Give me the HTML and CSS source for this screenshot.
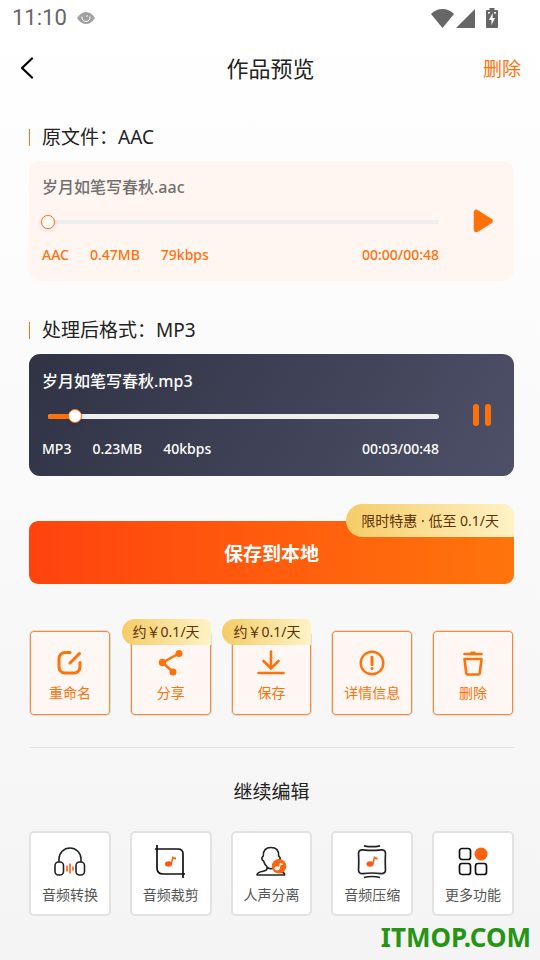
FILE: index.html
```html
<!DOCTYPE html>
<html lang="zh-CN">
<head>
<meta charset="utf-8">
<meta name="viewport" content="width=device-width, initial-scale=1">
<title>作品预览</title>
<link rel="stylesheet" href="styles.css">
</head>
<body>
<div class="status">
  <span class="clock">11:10</span>
  <svg class="eye" width="18" height="12" viewBox="0 0 18 12"><path d="M0 6Q4 0 9 0t9 6Q14 12 9 12T0 6Z" fill="#a0a0a0"/><path d="M5 4.500a4.100 4.100 0 1 0 8 0" fill="none" stroke="#fff" stroke-width="1"/><circle cx="10" cy="4" r=".8" fill="#fff"/></svg>
  <span class="signals">
    <svg width="23" height="19" viewBox="0 0 23 19"><path d="M0 5Q5 0 11.500 0T23 5L11.500 19Z" fill="#666"/></svg>
    <svg width="19" height="19" viewBox="0 0 19 19"><path d="M19 0V19H0Z" fill="#666"/></svg>
    <svg class="battery" width="12" height="20" viewBox="0 0 12 20"><path d="M3.500 0h5v2H11a1 1 0 0 1 1 1v16a1 1 0 0 1-1 1H1a1 1 0 0 1-1-1V3a1 1 0 0 1 1-1h2.500Z" fill="#666"/><path d="M6.600 5 3 12h2.500v5L9 10H6.600ZM2 4h2v1.500H2Zm6 0h2v1.500H8Z" fill="#fff"/></svg>
  </span>
</div>
<header class="bar">
  <button class="back" aria-label="返回"><svg width="14" height="22" viewBox="0 0 14 22"><path d="M12 1.500 2 11l10 9.500" fill="none" stroke="#000" stroke-width="2.200" stroke-linecap="round" stroke-linejoin="round"/></svg></button>
  <h1>作品预览</h1>
  <button class="remove">删除</button>
</header>
<main>
  <h2 class="label">原文件：AAC</h2>
  <section class="player light">
    <div class="track">
      <h3>岁月如笔写春秋.aac</h3>
      <div class="seek"><span class="rail"></span><input type="range" min="0" max="100" value="0" aria-label="原文件播放进度"></div>
      <div class="meta"><span>AAC</span><span>0.47MB</span><span>79kbps</span><span class="time">00:00/00:48</span></div>
    </div>
    <button class="toggle" aria-label="播放"><svg width="20" height="24" viewBox="0 0 20 24"><path d="M3.500 3.500v17L17 12Z" fill="#ff7109" stroke="#ff7109" stroke-width="5.500" stroke-linejoin="round"/></svg></button>
  </section>

  <h2 class="label">处理后格式：MP3</h2>
  <section class="player dark">
    <div class="track">
      <h3>岁月如笔写春秋.mp3</h3>
      <div class="seek"><span class="rail"><span class="fill" style="width:7%"></span></span><input type="range" min="0" max="100" value="7" aria-label="处理后播放进度"></div>
      <div class="meta"><span>MP3</span><span>0.23MB</span><span>40kbps</span><span class="time">00:03/00:48</span></div>
    </div>
    <button class="toggle" aria-label="暂停"><svg width="20" height="22" viewBox="0 0 20 22"><rect x="0" width="6" height="22" rx="3" fill="#ff7109"/><rect x="12" width="6" height="22" rx="3" fill="#ff7109"/></svg></button>
  </section>

  <div class="save">
    <button class="primary">保存到本地</button>
    <span class="promo">限时特惠 · 低至 0.1/天</span>
  </div>

  <div class="tiles actions">
    <button class="tile"><svg width="28" height="28" viewBox="0 0 28 28" fill="none" stroke="#ff7109" stroke-width="3" stroke-linecap="round"><path d="M14 3.500H9a6 6 0 0 0-6 6V18a6 6 0 0 0 6 6h9a6 6 0 0 0 6-6V13.500M14 14 23.500 4.500"/></svg>重命名</button>
    <button class="tile"><span class="price">约￥0.1/天</span><svg width="28" height="28" viewBox="0 0 28 28" fill="#ff7109"><path d="M22 4.500 5.500 13.500 16 23" fill="none" stroke="#ff7109" stroke-width="2.400"/><circle cx="22" cy="4.500" r="3.500"/><circle cx="5.500" cy="13.500" r="3.700"/><circle cx="16" cy="23" r="3.500"/></svg>分享</button>
    <button class="tile"><span class="price">约￥0.1/天</span><svg width="28" height="28" viewBox="0 0 28 28" fill="none" stroke="#ff7109" stroke-width="2.600" stroke-linecap="round"><path d="M14 2.500V18M6.500 12l7.500 7.500 7.500-7.500M1.500 24h25"/></svg>保存</button>
    <button class="tile"><svg width="28" height="28" viewBox="0 0 28 28" fill="none" stroke="#ff7109" stroke-width="2.400" stroke-linecap="round"><circle cx="14" cy="14" r="11.300"/><path d="M14 8v7.500" stroke-width="3"/><circle cx="14" cy="19.500" r="1.500" fill="#ff7109" stroke="none"/></svg>详情信息</button>
    <button class="tile"><svg width="28" height="28" viewBox="0 0 28 28" fill="none" stroke="#ff7109" stroke-width="2.600" stroke-linecap="round" stroke-linejoin="round"><path d="M5.500 5h17M12.500 3.700h3M5.500 10h17l-1.800 14.500q-.2 1-1.500 1h-10.400q-1.300 0-1.500-1Z"/></svg>删除</button>
  </div>

  <h2 class="more">继续编辑</h2>
  <div class="tiles tools">
    <button class="tile"><svg width="34" height="34" viewBox="0 0 34 34" fill="none" stroke="#222" stroke-width="1.600"><path d="M6 17v-3a11 11 0 0 1 22 0v3"/><rect x="2" y="17" width="8.500" height="13" rx="3.500"/><rect x="23" y="17" width="8.500" height="13" rx="3.500"/><path d="M14 20.500v6M17 18.500v10M20 21.500v4" stroke="#ff6a2a" stroke-width="1.800"/></svg>音频转换</button>
    <button class="tile"><svg width="34" height="34" viewBox="0 0 34 34" fill="none" stroke="#111" stroke-width="1.700"><path d="M3 0v23q0 6 6 6h22M1 4h23q5 0 5 5v24"/><g transform="translate(11 11)" stroke="none" fill="#ff5710"><ellipse cx="3.500" cy="8" rx="3.500" ry="2.800"/><path d="M5.500 8 7.500 0q1.500 2 3.500 1.500v2Q9 3.500 8.300 2.800L7 8Z"/></g></svg>音频裁剪</button>
    <button class="tile"><svg width="34" height="34" viewBox="0 0 34 34" fill="none" stroke="#222" stroke-width="1.600" stroke-linejoin="round"><path d="M13 24v-2.500Q10.500 19.500 9.500 16 7.500 15 8 12.500L9.300 11Q9 2.500 17 2.500T24.700 11L26 12.500Q26.500 15 24.500 16 23.500 19.500 21 21.500V24M13 22.500q4 2.500 8 0M13 24q-.5 1.500-4 2.200-6 1-6 3.800h27.500q.5-2-2.500-3"/><circle cx="25" cy="21.300" r="7.200" fill="#ff6309" stroke="none"/><g transform="translate(20.500 17.300) scale(.75)" stroke="none" fill="#fff"><ellipse cx="3.500" cy="8" rx="3.500" ry="2.800"/><path d="M5.500 8 7.500 0q1.500 2 3.500 1.500v2Q9 3.500 8.300 2.800L7 8Z"/></g></svg>人声分离</button>
    <button class="tile"><svg width="34" height="34" viewBox="0 0 34 34" fill="none" stroke="#222" stroke-width="1.700"><path d="M8 4.800q9 1.200 18 0 4.500-.3 4.500 4-.5 8 0 16 0 4-4.500 3.800-9-1.200-18 0-4.500.3-4.500-3.800.5-8 0-16 0-4.300 4.500-4ZM9 .8q8 1.800 16 0M9 32.500q8-2 16 0"/><g transform="translate(11.500 11)" stroke="none" fill="#ff5710"><ellipse cx="3.500" cy="8" rx="3.500" ry="2.800"/><path d="M5.500 8 7.500 0q1.500 2 3.500 1.500v2Q9 3.500 8.300 2.800L7 8Z"/></g></svg>音频压缩</button>
    <button class="tile"><svg width="34" height="34" viewBox="0 0 34 34" fill="none" stroke="#111" stroke-width="1.700"><rect x="3.500" y="3.500" width="11" height="11" rx="2.500"/><rect x="3.500" y="18.500" width="11" height="11" rx="2.500"/><rect x="19.500" y="18.500" width="11" height="11" rx="2.500"/><circle cx="25" cy="9" r="6.500" fill="#ff600c" stroke="none"/></svg>更多功能</button>
  </div>
</main>
<footer>ITMOP.COM</footer>
</body>
</html>
```
FILE: styles.css
```css
* { box-sizing: border-box; }
body {
  margin: 0;
  min-height: 100vh;
  font-family: "Noto Sans", "Noto Sans CJK SC", sans-serif;
  color: #222;
  background: linear-gradient(#fff, #f4f4f4);
}
button {
  border: 0;
  padding: 0;
  background: none;
  font: inherit;
  color: inherit;
  cursor: pointer;
}
svg { display: block; }
h1, h2, h3 { margin: 0; font-weight: 400; }

.status {
  display: flex;
  align-items: center;
  height: 36px;
  padding: 0 42px 0 12px;
}
.clock {
  font: 400 22px/24px Roboto, sans-serif;
  color: #666;
}
.eye { margin-left: 10px; }
.signals {
  display: flex;
  align-items: center;
  gap: 2px;
  margin-left: auto;
}
.battery { margin-left: 9px; }

.bar {
  display: grid;
  grid-template-columns: 1fr auto 1fr;
  align-items: center;
  height: 64px;
  padding: 0 19px 0 20px;
}
.bar h1 { font-size: 22px; line-height: 32px; }
.back { justify-self: start; }
.remove { justify-self: end; font-size: 19px; color: #ff7109; }

main { padding: 0 26px 0 29px; }
.label {
  display: flex;
  align-items: center;
  gap: 12px;
  margin: 23px 0 10px;
  font-size: 19px;
  line-height: 28px;
}
.label::before {
  content: "";
  width: 1px;
  height: 17px;
  background: #ff7109;
}

.player {
  display: flex;
  align-items: center;
  padding-left: 13px;
  border-radius: 11px;
}
.light { margin-bottom: 35px; background: #fff6f1; color: #ff7109; }
.dark { background: linear-gradient(120deg, #303344, #4d5067); color: #fff; }
.track { flex: 1; padding: 15px 0 17px; }
.dark .track { padding: 16px 0 18px; }
.track h3 { font-size: 16px; font-weight: 500; line-height: 22px; }
.light h3 { color: #707070; }
.seek {
  display: grid;
  align-items: center;
  height: 16px;
  margin: 16px -7px 16px -1px;
}
.seek > * { grid-area: 1 / 1; }
.rail {
  height: 4px;
  margin: 0 7px;
  border-radius: 3px;
  background: #eee;
}
.dark .rail { height: 5px; }
.fill {
  display: block;
  height: 100%;
  border-radius: 3px;
  background: #ff7109;
}
.seek input {
  appearance: none;
  width: 100%;
  height: 16px;
  margin: 0;
  background: none;
}
.seek input::-webkit-slider-thumb {
  appearance: none;
  width: 14px;
  height: 14px;
  border: 1px solid #ff7109;
  border-radius: 50%;
  background: #fff;
  box-shadow: 0 1px 4px rgba(0, 0, 0, .15);
}
.meta {
  display: flex;
  gap: 21px;
  font-size: 14px;
  font-weight: 500;
  line-height: 18px;
}
.time { margin-left: auto; }
.toggle {
  display: flex;
  justify-content: center;
  width: 48px;
  margin: 0 7px 0 20px;
}

.save { position: relative; margin-top: 45px; }
.primary {
  display: block;
  width: 100%;
  height: 63px;
  border-radius: 9px;
  background: linear-gradient(90deg, #ff430e, #ff750c);
  color: #fff;
  font-size: 19px;
  font-weight: 700;
}
.promo, .price {
  position: absolute;
  right: 0;
  background: linear-gradient(90deg, #f5cc67, #fff3c5);
  color: #5c3206;
  font-size: 14px;
  white-space: nowrap;
}
.promo {
  top: -17px;
  padding: 0 15px;
  border-radius: 17px 11px 0 17px;
  line-height: 33px;
}
.price {
  top: -12px;
  padding: 0 11px;
  border-radius: 13px 6px 0 13px;
  line-height: 26px;
}

.tiles {
  display: grid;
  grid-template-columns: repeat(5, 1fr);
  gap: 19px;
}
.tile {
  position: relative;
  display: flex;
  flex-direction: column;
  align-items: center;
  border-radius: 5px;
  font-size: 14px;
  line-height: 20px;
}
.actions {
  padding: 46px 0 31px;
  border-bottom: 1px solid #e4e4e4;
}
.actions .tile {
  gap: 6px;
  padding: 18px 0 12px;
  border: 1px solid #ddd;
  background: #fff7f3;
  box-shadow: inset 0 0 0 1px #ff8730;
  color: #ff7109;
}
.more {
  margin: 30px 0 25px;
  font-size: 19px;
  line-height: 28px;
  text-align: center;
}
.tools .tile {
  gap: 6px;
  padding: 12px 0 9px;
  border: 2px solid #e2e2e2;
  background: #fff;
  color: #555;
}

footer {
  padding: 4px 9px 0 0;
  font-size: 26px;
  font-weight: 700;
  line-height: 34px;
  text-align: right;
  color: #259513;
}
```
